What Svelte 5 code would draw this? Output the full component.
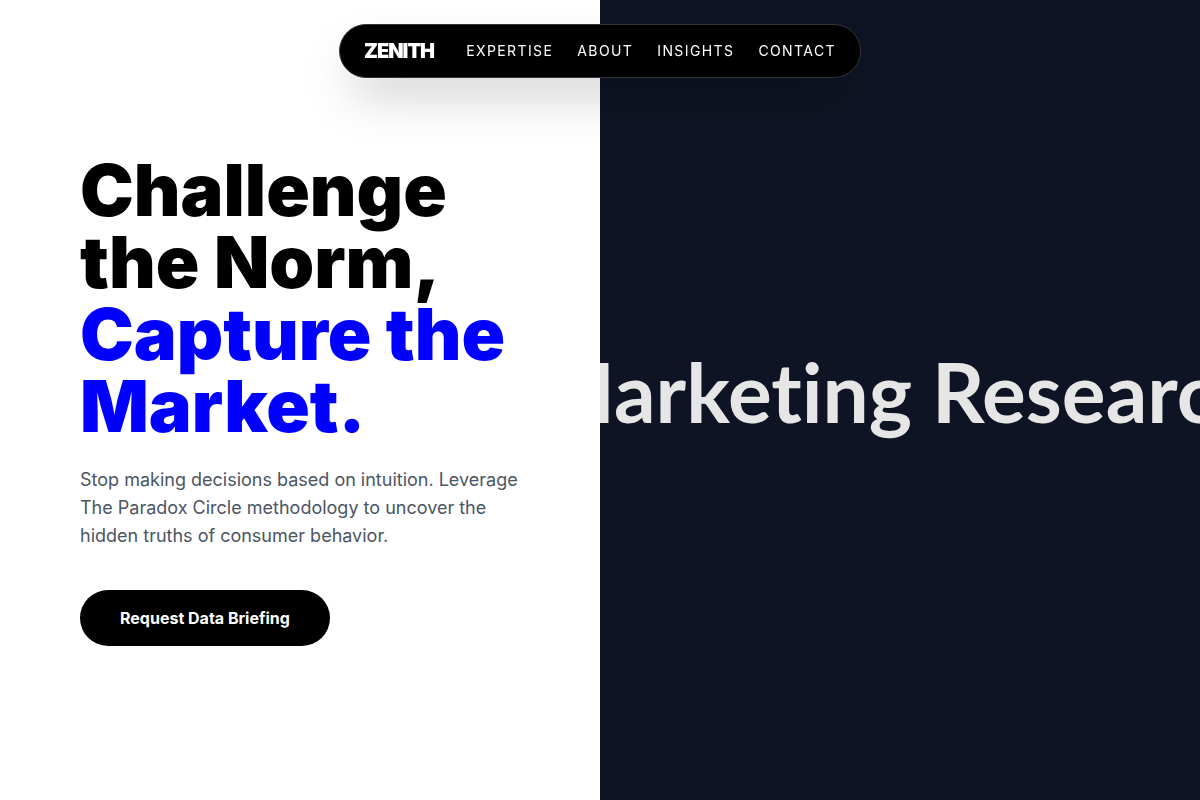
<script lang="ts">
  const links: string[] = ['Expertise', 'About', 'Insights', 'Contact'];
</script>

<nav class="navbar" aria-label="Main">
  <a class="logo" href="#top">ZENITH</a>
  <div class="links">
    {#each links as link}
      <a href="#{link.toLowerCase()}">{link}</a>
    {/each}
  </div>
</nav>

<main class="hero" id="top">
  <section class="intro">
    <h1>Challenge the Norm, <span class="accent">Capture the Market.</span></h1>
    <p>
      Stop making decisions based on intuition. Leverage The Paradox Circle
      methodology to uncover the hidden truths of consumer behavior.
    </p>
    <button type="button">Request Data Briefing</button>
  </section>
  <section class="visual">
    <span class="visual-title">Marketing Research</span>
  </section>
</main>

<style>
  :global(body) {
    margin: 0;
    background: #fff;
    font-family: Inter, sans-serif;
  }

  .navbar {
    position: fixed;
    top: 24px;
    left: 50%;
    z-index: 10;
    transform: translateX(-50%);
    display: flex;
    align-items: center;
    gap: 32px;
    padding: 12px 24px;
    border: 1px solid #333;
    border-radius: 999px;
    background: #000;
    box-shadow: 0 25px 50px -12px rgba(0, 0, 0, 0.25);
  }

  .navbar a {
    color: #fff;
    text-decoration: none;
  }

  .navbar .logo {
    font-size: 20px;
    line-height: 28px;
    font-weight: 900;
    letter-spacing: -1px;
  }

  .links {
    display: flex;
    gap: 24px;
    font-size: 14px;
    line-height: 20px;
    letter-spacing: 0.1em;
    text-transform: uppercase;
  }

  .hero {
    display: grid;
    grid-template-columns: 1fr 1fr;
    min-height: 100vh;
  }

  .intro {
    display: flex;
    flex-direction: column;
    justify-content: center;
    align-items: flex-start;
    padding: 0 80px;
  }

  h1 {
    margin: 0 0 24px;
    font-size: 72px;
    line-height: 72px;
    font-weight: 900;
  }

  .accent {
    color: #00f;
  }

  p {
    margin: 0 0 40px;
    max-width: 448px;
    color: #4b5563;
    font-size: 18px;
    line-height: 28px;
  }

  button {
    padding: 16px 40px;
    border: none;
    border-radius: 999px;
    background: #000;
    color: #fff;
    font-family: inherit;
    font-size: 16px;
    line-height: 24px;
    font-weight: 700;
    cursor: pointer;
  }

  .visual {
    display: flex;
    align-items: center;
    justify-content: center;
    min-width: 0;
    padding-bottom: 18px;
    overflow: hidden;
    background: #0e1423;
  }

  .visual-title {
    flex: none;
    color: #e6e6e6;
    font-family: Lato, sans-serif;
    font-size: 82px;
    font-weight: 700;
    font-variant-ligatures: none;
    white-space: nowrap;
  }
</style>
